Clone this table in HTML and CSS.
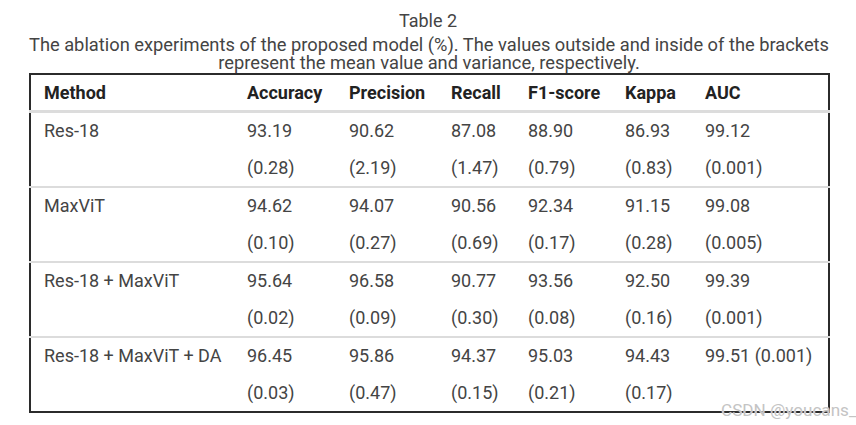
FILE: index.html
```html
<!DOCTYPE html>
<html>
<head>
<meta charset="utf-8">
<link rel="stylesheet" href="styles.css">
</head>
<body>
<div class="page">
  <div class="title">Table 2</div>
  <div class="caption">The ablation experiments of the proposed model (%). The values outside and inside of the brackets<br>represent the mean value and variance, respectively.</div>
  <table class="tbl">
    <colgroup>
      <col class="c-method"><col class="c-acc"><col class="c-pre"><col class="c-rec"><col class="c-f1"><col class="c-kap"><col class="c-auc">
    </colgroup>
    <thead>
      <tr><th>Method</th><th>Accuracy</th><th>Precision</th><th>Recall</th><th>F1-score</th><th>Kappa</th><th>AUC</th></tr>
    </thead>
    <tbody>
      <tr><td>Res-18</td><td>93.19<br>(0.28)</td><td>90.62<br>(2.19)</td><td>87.08<br>(1.47)</td><td>88.90<br>(0.79)</td><td>86.93<br>(0.83)</td><td>99.12<br>(0.001)</td></tr>
      <tr><td>MaxViT</td><td>94.62<br>(0.10)</td><td>94.07<br>(0.27)</td><td>90.56<br>(0.69)</td><td>92.34<br>(0.17)</td><td>91.15<br>(0.28)</td><td>99.08<br>(0.005)</td></tr>
      <tr><td>Res-18 + MaxViT</td><td>95.64<br>(0.02)</td><td>96.58<br>(0.09)</td><td>90.77<br>(0.30)</td><td>93.56<br>(0.08)</td><td>92.50<br>(0.16)</td><td>99.39<br>(0.001)</td></tr>
      <tr><td>Res-18 + MaxViT + DA</td><td>96.45<br>(0.03)</td><td>95.86<br>(0.47)</td><td>94.37<br>(0.15)</td><td>95.03<br>(0.21)</td><td>94.43<br>(0.17)</td><td>99.51 (0.001)</td></tr>
    </tbody>
  </table>
  <div class="watermark">CSDN @youcans_</div>
</div>
</body>
</html>
```

FILE: styles.css
```css
html, body {
  margin: 0;
  padding: 0;
  background: #fff;
}
body {
  font-family: Roboto, "Liberation Sans", sans-serif;
  width: 856px;
  height: 425px;
  overflow: hidden;
}
.page {
  position: relative;
  width: 856px;
  height: 425px;
  padding-top: 10px;
  box-sizing: border-box;
}
.title {
  text-align: center;
  font-size: 18px;
  line-height: 22px;
  color: #444;
}
.caption {
  text-align: center;
  font-size: 18.3px;
  line-height: 18px;
  color: #444;
  margin-top: 4px;
  padding-left: 2px;
}
.tbl {
  margin-left: 29px;
  margin-top: 1px;
  width: 801px;
  table-layout: fixed;
  border-collapse: collapse;
  border: 2px solid #2b2b2b;
  font-size: 18px;
}
.c-method { width: 204px; }
.c-acc { width: 102px; }
.c-pre { width: 102px; }
.c-rec { width: 77px; }
.c-f1 { width: 97px; }
.c-kap { width: 80px; }
.c-auc { width: 137px; }
.tbl th {
  text-align: left;
  font-weight: 700;
  color: #222;
  height: 35px;
  padding: 0 0 0 13px;
  vertical-align: middle;
}
.tbl thead tr {
  border-bottom: 3px solid #dcdcdc;
}
.tbl td {
  text-align: left;
  vertical-align: top;
  color: #444;
  line-height: 36.5px;
  padding: 0 0 0 13px;
  white-space: nowrap;
}
.tbl tbody tr + tr {
  border-top: 2px solid #dcdcdc;
}
.watermark {
  position: absolute;
  left: 721px;
  top: 399px;
  white-space: nowrap;
  font-size: 17.1px;
  line-height: 22px;
  color: #c4c4c4;
  text-shadow: 0 0 1px #fff;
}
```
